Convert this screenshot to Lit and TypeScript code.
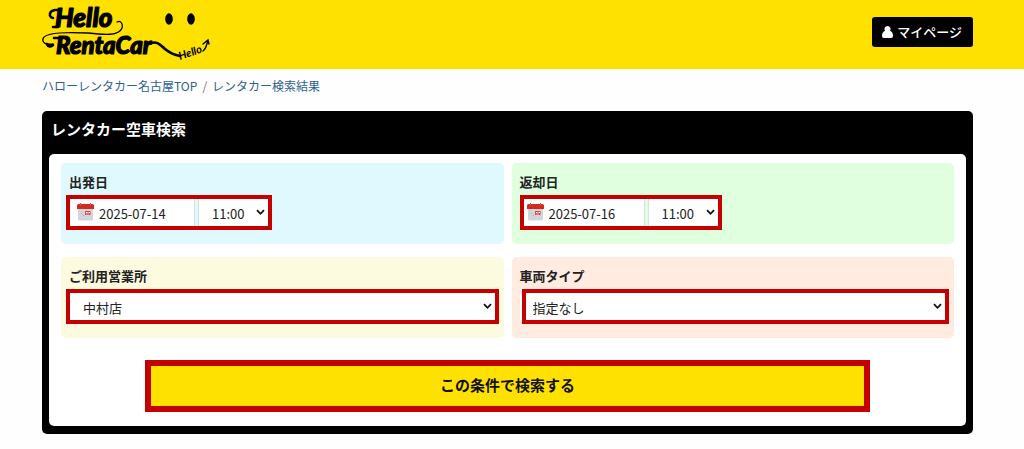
import { LitElement, html, svg, css } from "lit";
import { customElement, property } from "lit/decorators.js";

@customElement("site-logo")
export class SiteLogo extends LitElement {
  static styles = css`
    :host { display: block; line-height: 0; }
    .word { font-family: "Lato", sans-serif; font-style: italic; font-weight: 900; fill: #000; stroke: #000; stroke-width: 1.2px; stroke-linejoin: round; }
    .hello { font-size: 26px; }
    .rental { font-size: 24px; }
    .small { font-size: 11px; font-weight: 700; stroke-width: 0; }
  `;
  render() {
    return html`<svg width="170" height="65" viewBox="0 -5 170 65" role="img" aria-label="Hello RentaCar">
      ${svg`
        <text class="word hello" x="13" y="22">Hello</text>
        <text class="word rental" x="14" y="49">RentaCar</text>
        <path d="M75 17c4-2 6 2 5 6-3 8-17 7-34 5C26 27 2 27 1 34c-1 4 3 6 10 5" fill="none" stroke="#000" stroke-width="1.3" stroke-linecap="round"/>
        <path d="M11 13C6 12 7 5 14 5h4M11 22h5M5 39c1 3 4 3 6 1M12 33h5" fill="none" stroke="#000" stroke-width="2.6" stroke-linecap="round"/>
        <path d="M109 38c7-2 9 2 14 6 5 4 9 6 15 7" fill="none" stroke="#000" stroke-width="2.600" stroke-linecap="round"/>
        <ellipse cx="127" cy="14" rx="3.8" ry="5.8"/>
        <ellipse cx="149" cy="14" rx="3.8" ry="5.8"/>
        <text class="word small" x="138" y="55" transform="rotate(-19 138 55)">Hello</text>
        <path d="M161 46q3-2 5-11m-5 4 5-4 1 4" fill="none" stroke="#000" stroke-width="1.4" stroke-linecap="round"/>
      `}
    </svg>`;
  }
}

@customElement("search-field")
export class SearchField extends LitElement {
  @property() label = "";
  @property() tone = "blue";
  @property() date = "";
  @property() value = "";

  static styles = css`
    :host { display: block; min-width: 0; }
    .card { box-sizing: border-box; padding: 9px 9px 18px 8px; border-radius: 5px; color: #222; }
    .blue { background: #dff9ff; }
    .green { background: #dfffdf; }
    .yellow { background: #fdfbdf; }
    .orange { background: #ffebdf; }
    label { display: block; width: max-content; line-height: 20px; margin-bottom: 7px; font-size: 13px; font-weight: 700; }
    .row { position: relative; display: flex; gap: 3px; height: 27px; margin-left: 1px; }
    .green .row, .orange .row { margin-left: 0; }
    .timed { width: 198px; }
    .row::after { content: ""; position: absolute; inset: -4px; border: 4px solid #c40000; pointer-events: none; }
    .green .row::after { left: 0; }
    .orange .row::after { left: 2px; }
    .date { position: relative; flex: none; width: 125px; }
    .date svg { position: absolute; left: 7px; top: 4px; }
    input, select { box-sizing: border-box; width: 100%; height: 100%; margin: 0; border: 0; border-radius: 0; outline: 0; background: #fff; color: #222; font: inherit; font-size: 13px; }
    input { padding: 2px 0 0 29px; border-right: 1px solid #d5e2e6; }
    .pick { position: relative; flex: 1; min-width: 0; }
    select { appearance: none; padding: 2px 20px 0 13px; }
    .timed select { border-left: 1px solid #d5e2e6; }
    .pick svg { position: absolute; right: 3px; top: 10px; pointer-events: none; }
  `;

  render() {
    return html`<div class="card ${this.tone}">
      <label for="field">${this.label}</label>
      <div class="row ${this.date ? "timed" : ""}">
        ${this.date
          ? html`<div class="date">
              <input id="field" type="text" .value=${this.date} />
              <svg width="17" height="18" viewBox="0 0 17 18" aria-hidden="true">
                <path fill="#d3d5dc" d="M1 5h15v11q0 1.500-1.500 1.500h-12Q1 17.500 1 16z"/>
                <path fill="#d7281c" d="M0 2.500Q0 1 1.500 1h14Q17 1 17 2.500V6H0z"/>
                <path fill="#777" d="M3 0h1v3H3zM13 0h1v3h-1z"/>
                <path fill="#d94a48" d="M8 8h5.500v4H8z"/>
                <path fill="#fff" d="M9 9h1.500v1H9zm2.500 0H13v1h-1.500zM9 10.700h3v.6H9z"/>
                <path fill="#91afc6" d="M4 10h1v1H4zm2 2h1v1H6z"/>
              </svg>
            </div>`
          : ""}
        <div class="pick">
          <select id=${this.date ? "time" : "field"} aria-label=${this.date ? `${this.label} 時刻` : this.label}>
            <option>${this.value}</option>
          </select>
          <svg width="9" height="7" viewBox="0 0 9 7" aria-hidden="true"><path d="M1 1.200 4.500 4.800 8 1.200" fill="none" stroke="#111" stroke-width="1.8"/></svg>
        </div>
      </div>
    </div>`;
  }
}

@customElement("app-root")
export class AppRoot extends LitElement {
  static styles = css`
    :host { display: block; min-height: 100vh; background: #fefefe; font-family: "Noto Sans CJK JP", "Noto Sans", sans-serif; }
    header { box-sizing: border-box; display: flex; align-items: flex-start; justify-content: space-between; height: 69px; padding: 0 51px 0 42px; background: #ffe100; }
    .account { display: flex; align-items: center; gap: 4px; height: 30px; margin-top: 17px; padding: 0 11px 0 10px; border: 0; border-radius: 3px; background: #000; color: #fff; font: inherit; font-size: 13px; font-weight: 500; }
    .account span { padding-bottom: 2px; }
    main { padding: 0 51px 15px 42px; }
    nav { display: flex; gap: 5px; height: 42px; padding-top: 8px; box-sizing: border-box; font-size: 12px; line-height: 18px; color: #777; }
    nav a { color: #2d628f; text-decoration: none; }
    .panel { padding: 0 7px 8px 7px; border-radius: 5px; background: #000; }
    h1 { margin: 0; padding: 6px 2px 13px; color: #fff; font-size: 15px; line-height: 24px; font-weight: 700; }
    form { padding: 9px 12px 14px; border-radius: 5px; background: #fff; }
    .grid { display: grid; grid-template-columns: 1fr 1fr; gap: 13px 8px; }
    .wide { margin: 0 -12px; }
    .submit { display: block; width: 79%; height: 52px; margin: 22px auto 0; padding: 0 0 4px; border: 6px solid #c40000; background: #ffe100; color: #111; font: inherit; font-size: 15px; font-weight: 700; }
  `;

  render() {
    return html`
      <header>
        <site-logo></site-logo>
        <button class="account" type="button">
          <svg width="11" height="12" viewBox="0 0 11 12" aria-hidden="true"><path fill="#fff" d="M5.500 0a3 3 0 0 1 2.500 4.700C10 5.500 11 7.500 11 10q0 2-2 2H2q-2 0-2-2c0-2.500 1-4.500 3-5.300A3 3 0 0 1 5.500 0z"/></svg>
          <span>マイページ</span>
        </button>
      </header>
      <main>
        <nav aria-label="パンくず">
          <a href="#">ハローレンタカー名古屋TOP</a><span>/</span><a href="#">レンタカー検索結果</a>
        </nav>
        <section class="panel">
          <h1>レンタカー空車検索</h1>
          <form @submit=${(e: Event) => e.preventDefault()}>
            <div class="grid">
              <search-field label="出発日" tone="blue" date="2025-07-14" value="11:00"></search-field>
              <search-field label="返却日" tone="green" date="2025-07-16" value="11:00"></search-field>
              <search-field label="ご利用営業所" tone="yellow" value="中村店"></search-field>
              <search-field label="車両タイプ" tone="orange" value="指定なし"></search-field>
            </div>
            <div class="wide"><button class="submit" type="submit">この条件で検索する</button></div>
          </form>
        </section>
      </main>
    `;
  }
}
